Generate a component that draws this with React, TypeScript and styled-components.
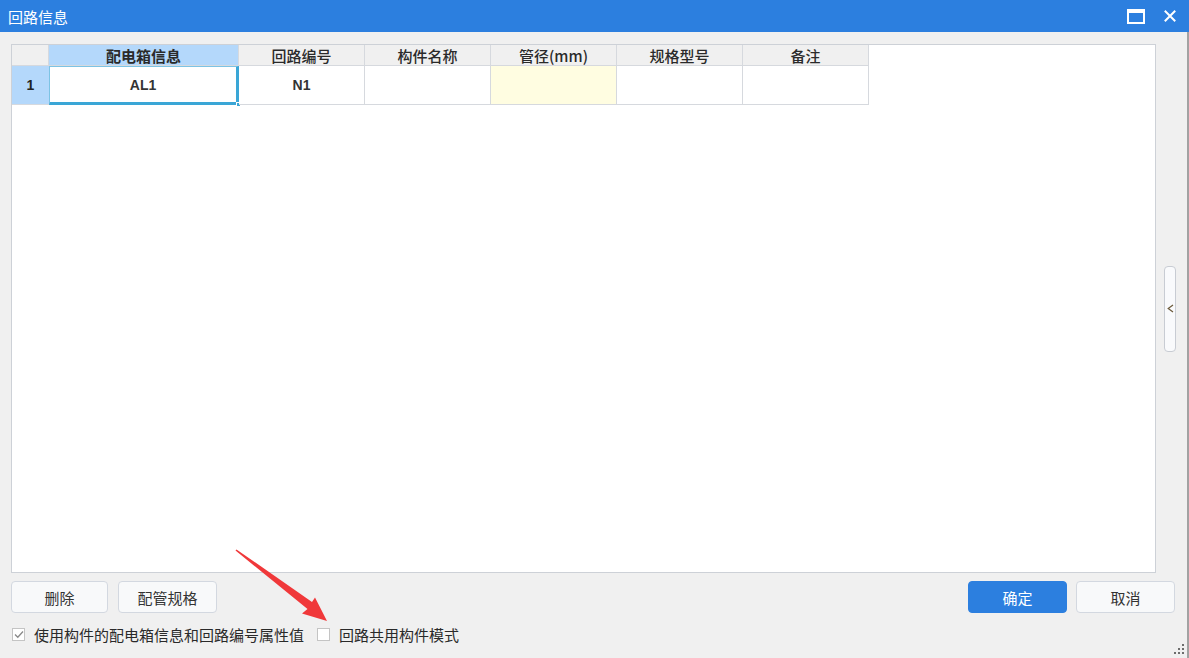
import React from 'react';
import styled, { createGlobalStyle } from 'styled-components';

const GlobalStyle = createGlobalStyle`
  html, body {
    margin: 0;
    padding: 0;
    background: #f0f0f0;
    font-family: "Noto Sans CJK SC", "Liberation Sans", sans-serif;
  }
  * { box-sizing: border-box; }
`;

const Window = styled.div`
  position: relative;
  width: 1189px;
  height: 658px;
  display: flex;
  flex-direction: column;
  background: #f0f0f0;
  overflow: hidden;
`;

const TitleBar = styled.div`
  height: 32px;
  flex: none;
  display: flex;
  align-items: center;
  padding: 0 8px 0 8px;
  background: #2c7fdf;
  color: #fff;
  font-size: 15px;
`;

const Title = styled.span`
  flex: 1;
`;

const TitleButton = styled.button`
  width: 22px;
  height: 22px;
  margin-left: 12px;
  padding: 0;
  border: none;
  background: none;
  display: flex;
  align-items: center;
  justify-content: center;
`;

const Body = styled.div`
  flex: 1;
  display: flex;
  flex-direction: column;
  padding: 12px 0 0 11px;
  border-right: 2px solid #a2a2a2;
`;

const MainRow = styled.div`
  height: 529px;
  display: flex;
`;

const GridPanel = styled.div`
  width: 1145px;
  background: #fff;
  border: 1px solid #cdd1d7;
`;

const Table = styled.div`
  display: grid;
  grid-template-columns: 37px 190px repeat(5, 126px);
`;

const HeadCell = styled.div<{ $active?: boolean }>`
  height: 21px;
  display: flex;
  align-items: center;
  justify-content: center;
  background: ${p => (p.$active ? '#b4d8fb' : '#f0f0f0')};
  border-right: 1px solid #d6d9de;
  border-bottom: 1px solid #d6d9de;
  font-size: 15px;
  font-weight: ${p => (p.$active ? 700 : 500)};
  color: #2a2a2a;
  line-height: 1;
`;

const RowHead = styled.div`
  height: 39px;
  display: flex;
  align-items: center;
  justify-content: center;
  background: #b4d8fb;
  border-bottom: 1px solid #d6d9de;
  font-family: "Liberation Sans", sans-serif;
  font-weight: 700;
  font-size: 14px;
  color: #222;
`;

const Cell = styled.div<{ $fill?: string; $selected?: boolean }>`
  position: relative;
  height: 39px;
  display: flex;
  align-items: center;
  justify-content: center;
  background: ${p => p.$fill || '#fff'};
  border-right: 1px solid #d6d9de;
  border-bottom: 1px solid #d6d9de;
  font-family: "Liberation Sans", sans-serif;
  font-weight: 700;
  font-size: 14px;
  color: #333;
  ${p =>
    p.$selected &&
    `
    border-left: 1px solid #7cc3e4;
    border-top: 1px solid #7cc3e4;
    border-right: 3px solid #3aa6d6;
    border-bottom: 3px solid #3aa6d6;
  `}
`;

const Handle = styled.span`
  position: absolute;
  right: -5px;
  bottom: -5px;
  width: 5px;
  height: 5px;
  background: #3aa6d6;
  border: 1px solid #fff;
`;

const Gutter = styled.div`
  flex: 1;
  display: flex;
  align-items: center;
  padding-left: 8px;
`;

const SideTab = styled.button`
  width: 12px;
  height: 86px;
  padding: 0;
  border: 1px solid #c8ccd3;
  border-radius: 4px;
  background: #f9fafc;
  display: flex;
  align-items: center;
  justify-content: center;
`;

const ButtonRow = styled.div`
  display: flex;
  align-items: center;
  margin-top: 8px;
  padding-right: 12px;
`;

const Spacer = styled.div`
  flex: 1;
`;

const Button = styled.button<{ $primary?: boolean; $w?: number; $gap?: number }>`
  width: ${p => p.$w ?? 99}px;
  height: 32px;
  margin-left: ${p => p.$gap ?? 0}px;
  border-radius: 4px;
  border: 1px solid ${p => (p.$primary ? '#2c7fdf' : '#d3d8e0')};
  background: ${p => (p.$primary ? '#2c7fdf' : '#f8f9fa')};
  color: ${p => (p.$primary ? '#fff' : '#333')};
  font-family: "Noto Sans CJK SC", sans-serif;
  font-size: 15px;
  padding: 0;
`;

const CheckRow = styled.div`
  display: flex;
  align-items: center;
  margin-top: 11px;
  padding-left: 1px;
  height: 20px;
  font-size: 15px;
  color: #2a2a2a;
`;

const CheckBox = styled.span<{ $gap?: number }>`
  width: 13px;
  height: 13px;
  margin-left: ${p => p.$gap ?? 0}px;
  margin-right: 9px;
  border: 1px solid #c4c4c4;
  background: #fff;
  display: flex;
  align-items: center;
  justify-content: center;
`;

const ArrowLayer = styled.svg`
  position: absolute;
  left: 0;
  top: 0;
  pointer-events: none;
`;

const Grip = styled.svg`
  position: absolute;
  right: 4px;
  bottom: 3px;
`;

const columns = ['配电箱信息', '回路编号', '构件名称', '管径(mm)', '规格型号', '备注'];

export default function App() {
  return (
    <Window>
      <GlobalStyle />
      <TitleBar>
        <Title>回路信息</Title>
        <TitleButton aria-label="最大化">
          <svg width="18" height="15" viewBox="0 0 18 15">
            <rect x="1" y="1" width="16" height="13" fill="none" stroke="#fff" strokeWidth="2" />
            <rect x="1" y="1" width="16" height="3" fill="#fff" />
          </svg>
        </TitleButton>
        <TitleButton aria-label="关闭">
          <svg width="12" height="12" viewBox="0 0 12 12">
            <path d="M1.5 1.5 L10.5 10.5 M10.5 1.5 L1.5 10.5" stroke="#fff" strokeWidth="2" strokeLinecap="square" />
          </svg>
        </TitleButton>
      </TitleBar>
      <Body>
        <MainRow>
          <GridPanel>
            <Table>
              <HeadCell />
              {columns.map((c, i) => (
                <HeadCell key={c} $active={i === 0}>
                  {c}
                </HeadCell>
              ))}
              <RowHead>1</RowHead>
              <Cell $selected>
                AL1
                <Handle />
              </Cell>
              <Cell>N1</Cell>
              <Cell />
              <Cell $fill="#fffde1" />
              <Cell />
              <Cell />
            </Table>
          </GridPanel>
          <Gutter>
            <SideTab aria-label="展开">
              <svg width="7" height="9" viewBox="0 0 7 9">
                <path d="M6 1 L1.2 4.5 L6 8" fill="none" stroke="#6b5a3a" strokeWidth="1.2" />
              </svg>
            </SideTab>
          </Gutter>
        </MainRow>
        <ButtonRow>
          <Button $w={97}>删除</Button>
          <Button $w={99} $gap={10}>配管规格</Button>
          <Spacer />
          <Button $primary>确定</Button>
          <Button $gap={9}>取消</Button>
        </ButtonRow>
        <CheckRow>
          <CheckBox>
            <svg width="10" height="9" viewBox="0 0 10 9">
              <path d="M1 4.5 L3.8 7.3 L9 1.5" fill="none" stroke="#8a8a8a" strokeWidth="1.3" />
            </svg>
          </CheckBox>
          使用构件的配电箱信息和回路编号属性值
          <CheckBox $gap={13} />
          回路共用构件模式
        </CheckRow>
      </Body>
      <ArrowLayer width="1189" height="658" viewBox="0 0 1189 658">
        <polygon
          points="235.5,550.6 236.5,549.4 312,602 315,597.5 327,621 302,613.5 307.5,609"
          fill="#f0383a"
        />
      </ArrowLayer>
      <Grip width="11" height="11" viewBox="0 0 11 11">
        <g fill="#6d6d6d">
          <rect x="8" y="0" width="2" height="2" />
          <rect x="4" y="4" width="2" height="2" />
          <rect x="8" y="4" width="2" height="2" />
          <rect x="0" y="8" width="2" height="2" />
          <rect x="4" y="8" width="2" height="2" />
          <rect x="8" y="8" width="2" height="2" />
        </g>
      </Grip>
    </Window>
  );
}
